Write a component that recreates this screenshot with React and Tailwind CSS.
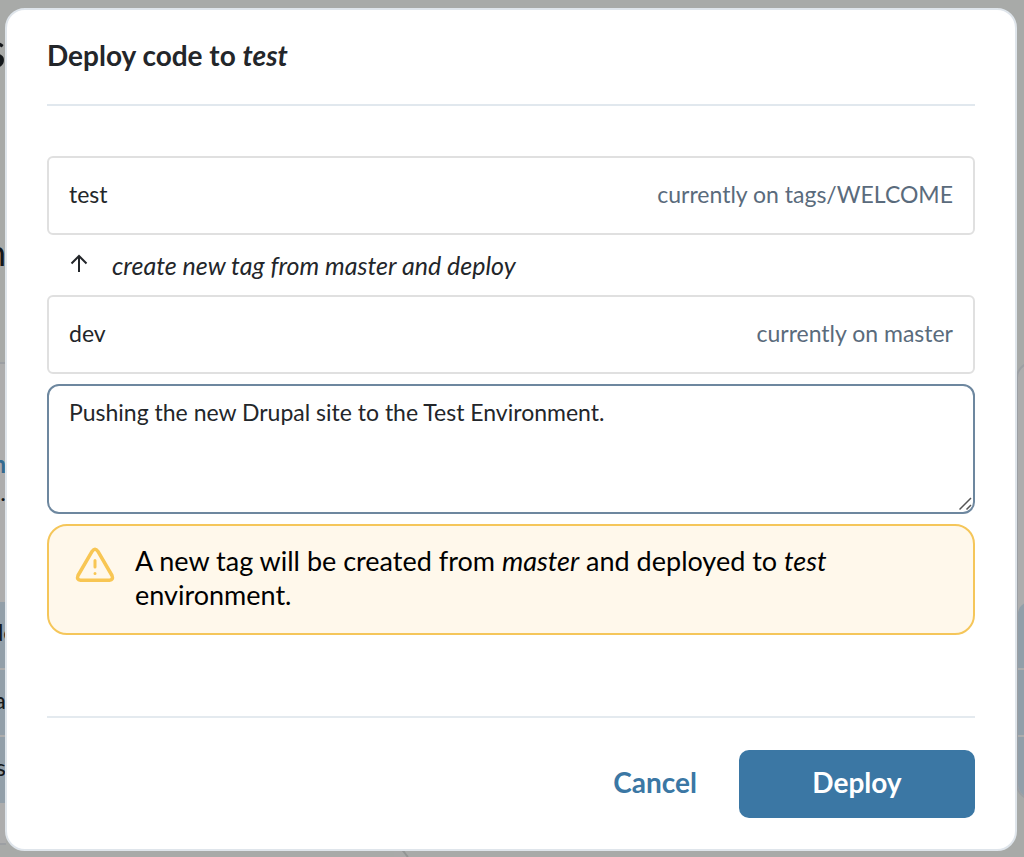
import { useState } from "react";

function Backdrop() {
  return (
    <div
      aria-hidden="true"
      className="absolute inset-0 flex justify-between overflow-hidden bg-[#a8aaa8] text-[#14181b]"
    >
      <div className="flex w-1.5 flex-col overflow-hidden">
        <div className="flex h-[98px] items-center justify-end text-[50px] leading-none">s</div>
        <div className="flex h-[264px] items-end justify-end pb-[92px] text-[36px] leading-none">n</div>
        <div className="flex h-[240px] flex-col items-end border-t-2 border-[#9c9fa3] bg-[#adadad] pt-[86px]">
          <span className="text-[24px] font-bold leading-7 text-[#336a91]">n</span>
          <span className="text-[24px] leading-7">.</span>
        </div>
        <div className="flex h-[66px] items-center justify-end bg-[#929fa9] pb-1.5 text-[24px]">
          <span className="-mr-2.5">de</span>
        </div>
        <div className="flex h-[67px] items-center justify-end border-t-2 border-[#adadad] bg-[#929fa9] pb-1.5 text-[24px]">a</div>
        <div className="flex h-[68px] items-center justify-end border-t-2 border-[#adadad] bg-[#929fa9] pb-1.5 text-[24px]">s</div>
        <div className="h-[42px] border-b-2 border-[#9c9fa3] bg-[#adadad]" />
      </div>
      <svg className="absolute bottom-0 left-[38.5%] h-2 w-7" viewBox="0 0 28 8">
        <path d="M0 0H7C10 2 11 5 14 8H0Z" fill="#a9aaa9" />
        <path d="M7 0C10 2 11 5 14 8" fill="none" stroke="#929594" strokeWidth="2" />
      </svg>
      <div className="flex w-2 flex-col overflow-hidden">
        <div className="mt-[362px] h-[438px] w-10 overflow-hidden rounded-2xl border-2 border-[#9c9fa3] bg-[#adadad]">
          <div className="mt-[238px] h-[66px] rounded-tl-xl bg-[#929fa9]" />
          <div className="h-[67px] border-t-2 border-[#adadad] bg-[#929fa9]" />
          <div className="h-[68px] border-t-2 border-[#adadad] bg-[#929fa9]" />
        </div>
      </div>
    </div>
  );
}

function EnvironmentRow({ name, status }) {
  return (
    <div className="flex items-center justify-between rounded-md border-2 border-[#e0e0e0] px-5 pt-5 pb-[23px] text-[23px] leading-8">
      <span>{name}</span>
      <span className="text-[#5a6b7c]">{status}</span>
    </div>
  );
}

export default function App() {
  const [message, setMessage] = useState("Pushing the new Drupal site to the Test Environment.");

  return (
    <div className="relative min-h-screen font-['Lato','Open_Sans',sans-serif] text-[#23262a]">
      <Backdrop />
      <div className="relative pt-2 pr-[7px] pb-1.5 pl-[5px]">
        <section
          role="dialog"
          aria-modal="true"
          aria-labelledby="dialog-title"
          className="rounded-[20px] border-2 border-[#dfe5eb] bg-white px-10 pt-[27px] pb-[31px]"
        >
          <h1
            id="dialog-title"
            className="border-b-2 border-[#e1e8ee] pb-[31px] text-[28px] leading-9 font-bold"
          >
            Deploy code to <em>test</em>
          </h1>

          <div className="pt-[50px] pb-[81px]">
            <EnvironmentRow name="test" status="currently on tags/WELCOME" />
            <div className="flex h-[60px] items-center gap-6 pt-0.5 pl-[23px] text-[25px]">
              <svg className="mb-1 h-5 w-[18px]" viewBox="0 0 18 20" fill="none" stroke="currentColor" strokeWidth="2" aria-hidden="true">
                <path d="M9 18V2M1.5 9.5L9 2L16.5 9.5" />
              </svg>
              <em>create new tag from master and deploy</em>
            </div>
            <EnvironmentRow name="dev" status="currently on master" />

            <div className="relative mt-2.5">
              <textarea
                aria-label="Deploy message"
                value={message}
                onChange={(e) => setMessage(e.target.value)}
                className="block h-[130px] w-full resize-none rounded-xl border-2 border-[#6d879f] bg-white px-5 py-2.5 text-[23px] leading-8 outline-none"
              />
              <svg className="pointer-events-none absolute right-0.5 bottom-0.5 h-4 w-3.5" viewBox="0 0 14 16" fill="none" stroke="#555" strokeWidth="1.5" aria-hidden="true">
                <path d="M0.5 13.5L12 2M7.5 13.5L12 9" />
              </svg>
            </div>

            <div
              role="alert"
              className="mt-2.5 flex gap-5 rounded-[20px] border-2 border-[#f5c65a] bg-[#fff8eb] px-[26px] pt-[18px] pb-[21px] text-[27px] leading-[34px] text-black"
            >
              <svg className="mt-[3px] h-9 w-10 shrink-0" viewBox="0 0 40 36" fill="none" stroke="#f8c653" strokeWidth="3.5" strokeLinecap="round" strokeLinejoin="round" aria-hidden="true">
                <path d="M17.2 4.2Q20 0.2 22.8 4.2L37 28.5Q38.6 32.8 34.5 33.2H5.5Q1.4 32.8 3 28.5Z" />
                <path d="M20 13.5V20M20 26.4V26.5" strokeWidth="3" />
              </svg>
              <p>
                A new tag will be created from <em>master</em> and deployed to <em>test</em> environment.
              </p>
            </div>
          </div>

          <div className="flex items-center justify-end border-t-2 border-[#e4eaef] pt-8 text-[28px] leading-9 font-bold">
            <button type="button" className="px-[42px] pt-3.5 pb-[18px] text-[#3b77a4]">
              Cancel
            </button>
            <button type="button" className="w-[236px] rounded-[10px] bg-[#3b77a4] pt-3.5 pb-[18px] text-white">
              Deploy
            </button>
          </div>
        </section>
      </div>
    </div>
  );
}
